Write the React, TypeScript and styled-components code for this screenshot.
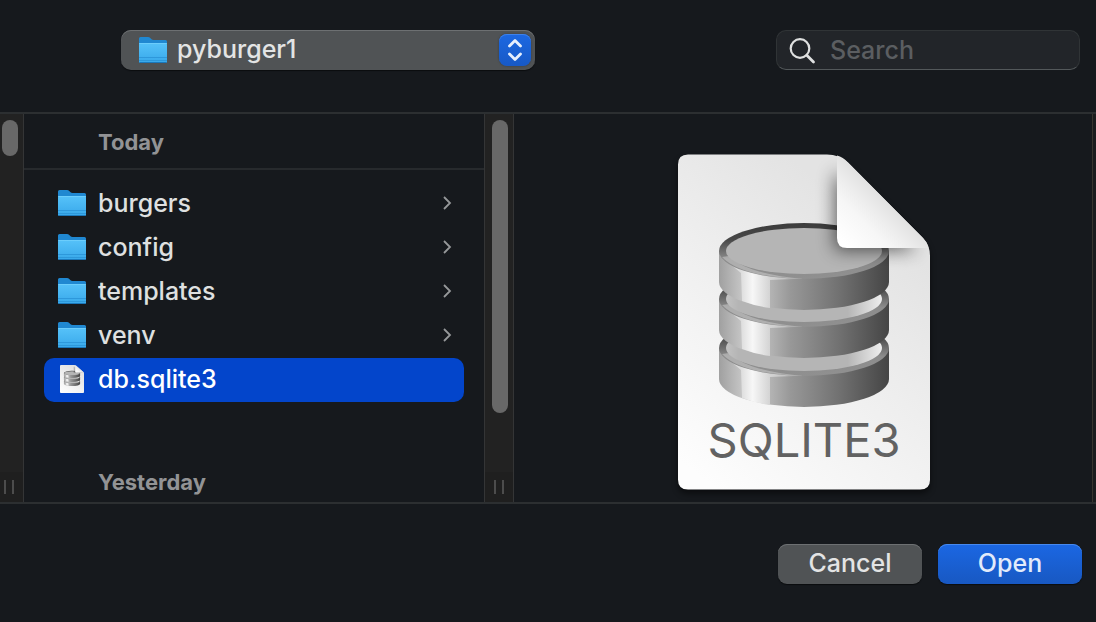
import React, { useId } from "react";
import styled, { createGlobalStyle, css } from "styled-components";

const line = "#2c2f31";

const GlobalStyle = createGlobalStyle`
  *, *::before, *::after { box-sizing: border-box; }
  body {
    margin: 0;
    background: #16191d;
    color: #dfe0e0;
    font-family: Inter, "Liberation Sans", sans-serif;
    font-size: 25px;
    font-weight: 500;
    line-height: 32px;
  }
  button, input, select { font: inherit; color: inherit; }
`;

const Dialog = styled.form`
  display: flex;
  flex-direction: column;
  min-height: 100vh;
`;

const Toolbar = styled.header`
  display: flex;
  justify-content: space-between;
  gap: 24px;
  padding: 30px 16px 42px 121px;
`;

const LocationPicker = styled.label`
  position: relative;
  flex: 0 1 414px;
`;

const LocationSelect = styled.select`
  display: block;
  appearance: none;
  width: 100%;
  height: 40px;
  padding: 0 44px 2px 56px;
  border: 0;
  border-radius: 10px;
  background: #505355;
  box-shadow: inset 0 1px 0 #6d7072, 0 1px 1px #0b0d0f;
  color: #e3e4e4;
`;

const LocationIcon = styled.span`
  position: absolute;
  top: 6px;
  left: 18px;
  display: flex;
  pointer-events: none;
`;

const Stepper = styled.span`
  position: absolute;
  top: 4px;
  right: 4px;
  display: grid;
  place-items: center;
  width: 32px;
  height: 32px;
  border-radius: 8px;
  background: linear-gradient(#1c68e2, #1759c6);
  box-shadow: inset 0 1px 0 #3f82ea, 0 0 2px #2c3644;
  pointer-events: none;
`;

const SearchField = styled.label`
  display: flex;
  align-items: center;
  gap: 14px;
  flex: 0 1 304px;
  min-width: 0;
  height: 40px;
  padding: 0 12px;
  border: 1px solid #303436;
  border-bottom-color: #53585a;
  border-radius: 10px;
  background: #222529;
`;

const SearchInput = styled.input`
  flex: 1;
  min-width: 0;
  padding: 0;
  border: 0;
  outline: 0;
  background: none;
  &::placeholder { color: #5b5e61; opacity: 1; }
`;

const Browser = styled.main`
  flex: 1;
  display: grid;
  grid-template-columns: 24px minmax(0, 460px) 30px minmax(0, 1fr) 4px;
  border: solid ${line};
  border-width: 2px 0;
`;

const ScrollTrack = styled.div<{ $inner?: boolean }>`
  display: flex;
  flex-direction: column;
  align-items: flex-end;
  justify-content: space-between;
  padding-top: 6px;
  border-right: 1px solid #343536;
  background: #222222;
  ${(p) => p.$inner && css`border-left: 1px solid #343536;`}
`;

const Thumb = styled.div<{ $length: number }>`
  width: 16px;
  height: ${(p) => p.$length}px;
  margin-right: 5px;
  border-radius: 8px;
  background: #686868;
`;

const Grip = styled.div`
  display: flex;
  justify-content: flex-end;
  gap: 6px;
  width: 100%;
  height: 30px;
  padding: 8px 9px 8px 0;
  background: #1f1f1f;
  &::before, &::after {
    content: "";
    width: 2px;
    background: #4c4c4c;
  }
`;

const Column = styled.section`
  min-width: 0;
`;

const GroupTitle = styled.h2<{ $ruled?: boolean }>`
  margin: 0;
  padding: 12px 20px 4px 74px;
  color: #929395;
  font-size: 22px;
  font-weight: 700;
  ${(p) => p.$ruled && css`
    padding-bottom: 10px;
    border-bottom: 2px solid #272a2d;
  `}
`;

const FileList = styled.ul`
  margin: 0;
  padding: 12px 20px 52px;
  list-style: none;
`;

const FileRow = styled.button<{ $selected?: boolean }>`
  display: flex;
  align-items: center;
  gap: 12px;
  width: 100%;
  height: 44px;
  padding: 0 12px 2px 14px;
  border: 0;
  border-radius: 10px;
  background: ${(p) => (p.$selected ? "#0345cb" : "transparent")};
  color: ${(p) => (p.$selected ? "#ffffff" : "#dfe0e0")};
  text-align: left;
`;

const IconSlot = styled.span`
  display: grid;
  place-items: center;
  width: 28px;
  height: 28px;
`;

const FileName = styled.span`
  flex: 1;
  min-width: 0;
  overflow: hidden;
  text-overflow: ellipsis;
  white-space: nowrap;
`;

const Preview = styled.section`
  display: flex;
  justify-content: center;
  align-items: flex-start;
  padding-top: 30px;
`;

const Edge = styled.div`
  border-left: 1px solid #38352f;
  background: #1b1c1e;
`;

const Footer = styled.footer`
  display: flex;
  justify-content: flex-end;
  gap: 16px;
  padding: 40px 14px 38px;
`;

const ActionButton = styled.button<{ $primary?: boolean }>`
  width: 144px;
  height: 40px;
  padding: 0 0 2px;
  border: 0;
  border-radius: 9px;
  background: ${(p) => (p.$primary ? "linear-gradient(#1b67e3, #1858c2)" : "#505355")};
  box-shadow: inset 0 1px 0 ${(p) => (p.$primary ? "#4789ee" : "#6d7072")}, 0 1px 1px #0b0d0f;
  color: ${(p) => (p.$primary ? "#e2ebfb" : "#e3e4e4")};
`;

function FolderIcon() {
  const id = useId();
  return (
    <svg width="28" height="28" viewBox="0 0 28 28" aria-hidden="true">
      <defs>
        <linearGradient id={id} x1="0" y1="0" x2="0" y2="1">
          <stop offset="0" stopColor="#56c2f9" />
          <stop offset="1" stopColor="#38a8ea" />
        </linearGradient>
      </defs>
      <path d="M0 2.5Q0 1 1.5 1H9Q10.300 1 11.300 2L12.500 3.200Q13.300 4 14.500 4H26.500Q28 4 28 5.500V25H0Z" fill="#2088d1" />
      <path d="M0 8.500Q0 7 1.500 7H26.500Q28 7 28 8.500V25.500Q28 27 26.500 27H1.500Q0 27 0 25.500Z" fill={`url(#${id})`} />
      <path d="M0 7.500H28" stroke="#72d1fc" strokeWidth="0.800" />
      <path d="M0 21.500H28M0 24.500H28" stroke="#2d95d8" strokeWidth="0.900" />
      <path d="M0.500 26.500H27.500" stroke="#1b78bb" strokeWidth="1" />
    </svg>
  );
}

function Disk({ y, id, top }: { y: number; id: string; top?: boolean }) {
  return (
    <g transform={`translate(0 ${y})`}>
      <path d="M52 107V138A85 28 0 0 0 222 138V107Z" fill={`url(#${id}side)`} />
      <path d="M56 114L74 129L75 157Q88 162 103 164V136L138 134.500Q85 134 56 114Z" fill={`url(#${id}shine)`} />
      <ellipse cx="137" cy="107" rx="85" ry="28" fill={`url(#${id}rim)`} />
      <path d="M55 113Q74 133 137 135Q80 130 62 112Z" fill="#c4c4c4" opacity="0.600" />
      <ellipse cx="137" cy="107" rx="78" ry="23" fill={top ? "#b5b5b5" : `url(#${id}lid)`} />
    </g>
  );
}

function DatabaseDocument({ large }: { large?: boolean }) {
  const id = useId();
  const sheet =
    "M21 10.500H160Q172 10.500 181 18.500L256 94Q263 101 263 112V336Q263 345.500 253 345.500H21Q11 345.500 11 335.500V20.500Q11 10.500 21 10.500Z";
  return (
    <svg
      width={large ? 272 : 24}
      height={large ? 358 : 28}
      viewBox={large ? "0 0 272 358" : "11 10 252 336"}
      preserveAspectRatio={large ? "xMidYMid" : "none"}
      role="img"
      aria-label="SQLite database document"
    >
      <defs>
        <linearGradient id={`${id}paper`} gradientUnits="userSpaceOnUse" x1="30" y1="330" x2="220" y2="90">
          <stop offset="0" stopColor="#fdfdfd" />
          <stop offset="0.600" stopColor="#eeeeee" />
          <stop offset="1" stopColor="#e3e3e3" />
        </linearGradient>
        <linearGradient id={`${id}fold`} gradientUnits="userSpaceOnUse" x1="176" y1="98" x2="218" y2="56">
          <stop offset="0" stopColor="#ffffff" />
          <stop offset="0.500" stopColor="#f6f6f6" />
          <stop offset="1" stopColor="#e2e2e2" />
        </linearGradient>
        <linearGradient id={`${id}side`} x1="0" x2="1" y1="0" y2="0">
          <stop offset="0" stopColor="#a0a0a0" />
          <stop offset="0.130" stopColor="#c4c4c4" />
          <stop offset="0.300" stopColor="#b4b4b4" />
          <stop offset="0.420" stopColor="#989898" />
          <stop offset="0.700" stopColor="#727272" />
          <stop offset="1" stopColor="#454545" />
        </linearGradient>
        <linearGradient id={`${id}shine`} gradientUnits="userSpaceOnUse" x1="56" x2="130" y1="0" y2="0">
          <stop offset="0" stopColor="#dadada" />
          <stop offset="0.240" stopColor="#dcdcdc" />
          <stop offset="0.400" stopColor="#f7f7f7" />
          <stop offset="0.630" stopColor="#d4d4d4" />
          <stop offset="1" stopColor="#b4b4b4" />
        </linearGradient>
        <linearGradient id={`${id}rim`} x1="0" x2="0" y1="0" y2="1">
          <stop offset="0" stopColor="#3c3c3c" />
          <stop offset="0.300" stopColor="#484848" />
          <stop offset="0.650" stopColor="#8c8c8c" />
          <stop offset="1" stopColor="#909090" />
        </linearGradient>
        <linearGradient id={`${id}lid`} x1="0" x2="1" y1="0" y2="0">
          <stop offset="0" stopColor="#c2c2c2" />
          <stop offset="0.080" stopColor="#b5b5b5" />
          <stop offset="0.780" stopColor="#b5b5b5" />
          <stop offset="1" stopColor="#eeeeee" />
        </linearGradient>
        <clipPath id={`${id}clip`}>
          <path d={sheet} />
        </clipPath>
        <filter id={`${id}soft`} x="-50%" y="-50%" width="200%" height="200%">
          <feGaussianBlur stdDeviation="9" />
        </filter>
        <filter id={`${id}drop`} x="-10%" y="-10%" width="120%" height="120%">
          <feGaussianBlur stdDeviation="3" />
        </filter>
      </defs>
      {large && <path d={sheet} transform="translate(0 4)" fill="#000000" opacity="0.500" filter={`url(#${id}drop)`} />}
      <path d={sheet} fill={`url(#${id}paper)`} />
      <Disk y={97} id={id} />
      <Disk y={48} id={id} />
      <Disk y={0} id={id} top />
      <g clipPath={`url(#${id}clip)`}>
        <path d="M168 26L250 106H168Z" fill="#000000" opacity="0.600" filter={`url(#${id}soft)`} />
      </g>
      <path d="M170 11.500Q176 13 181 18.500L256 94Q260 98 261.500 104H180Q170 104 170 94Z" fill={`url(#${id}fold)`} />
      {large && (
        <text x="137" y="313" textAnchor="middle" fontSize="47" fontWeight="400" fill="#626262">
          SQLITE3
        </text>
      )}
    </svg>
  );
}

const folders = ["burgers", "config", "templates", "venv"];

export default function App() {
  return (
    <>
      <GlobalStyle />
      <Dialog onSubmit={(e) => e.preventDefault()}>
        <Toolbar>
          <LocationPicker>
            <LocationSelect aria-label="Location" defaultValue="pyburger1">
              <option>pyburger1</option>
            </LocationSelect>
            <LocationIcon>
              <FolderIcon />
            </LocationIcon>
            <Stepper>
              <svg width="16" height="24" viewBox="0 0 16 24" fill="none" stroke="#e6effd" strokeWidth="2.800" strokeLinecap="round" strokeLinejoin="round" aria-hidden="true">
                <path d="M2.500 8L8 2.500L13.500 8M2.500 16L8 21.500L13.500 16" />
              </svg>
            </Stepper>
          </LocationPicker>
          <SearchField>
            <svg width="27" height="27" viewBox="0 0 27 27" fill="none" stroke="#dfe0e0" strokeWidth="2.200" strokeLinecap="round" aria-hidden="true">
              <circle cx="11" cy="11.500" r="9.300" />
              <path d="M17.800 18.300L24.500 25" strokeWidth="2.800" />
            </svg>
            <SearchInput type="search" placeholder="Search" aria-label="Search" />
          </SearchField>
        </Toolbar>

        <Browser>
          <ScrollTrack>
            <Thumb $length={36} />
            <Grip />
          </ScrollTrack>
          <Column>
            <GroupTitle $ruled>Today</GroupTitle>
            <FileList>
              {folders.map((name) => (
                <li key={name}>
                  <FileRow type="button">
                    <IconSlot>
                      <FolderIcon />
                    </IconSlot>
                    <FileName>{name}</FileName>
                    <svg width="10" height="14" viewBox="0 0 10 14" fill="none" stroke="#96989a" strokeWidth="1.800" aria-hidden="true">
                      <path d="M2 1L8 7L2 13" />
                    </svg>
                  </FileRow>
                </li>
              ))}
              <li>
                <FileRow type="button" $selected>
                  <IconSlot>
                    <DatabaseDocument />
                  </IconSlot>
                  <FileName>db.sqlite3</FileName>
                </FileRow>
              </li>
            </FileList>
            <GroupTitle>Yesterday</GroupTitle>
          </Column>
          <ScrollTrack $inner>
            <Thumb $length={293} />
            <Grip />
          </ScrollTrack>
          <Preview>
            <DatabaseDocument large />
          </Preview>
          <Edge />
        </Browser>

        <Footer>
          <ActionButton type="button">Cancel</ActionButton>
          <ActionButton type="submit" $primary>
            Open
          </ActionButton>
        </Footer>
      </Dialog>
    </>
  );
}
